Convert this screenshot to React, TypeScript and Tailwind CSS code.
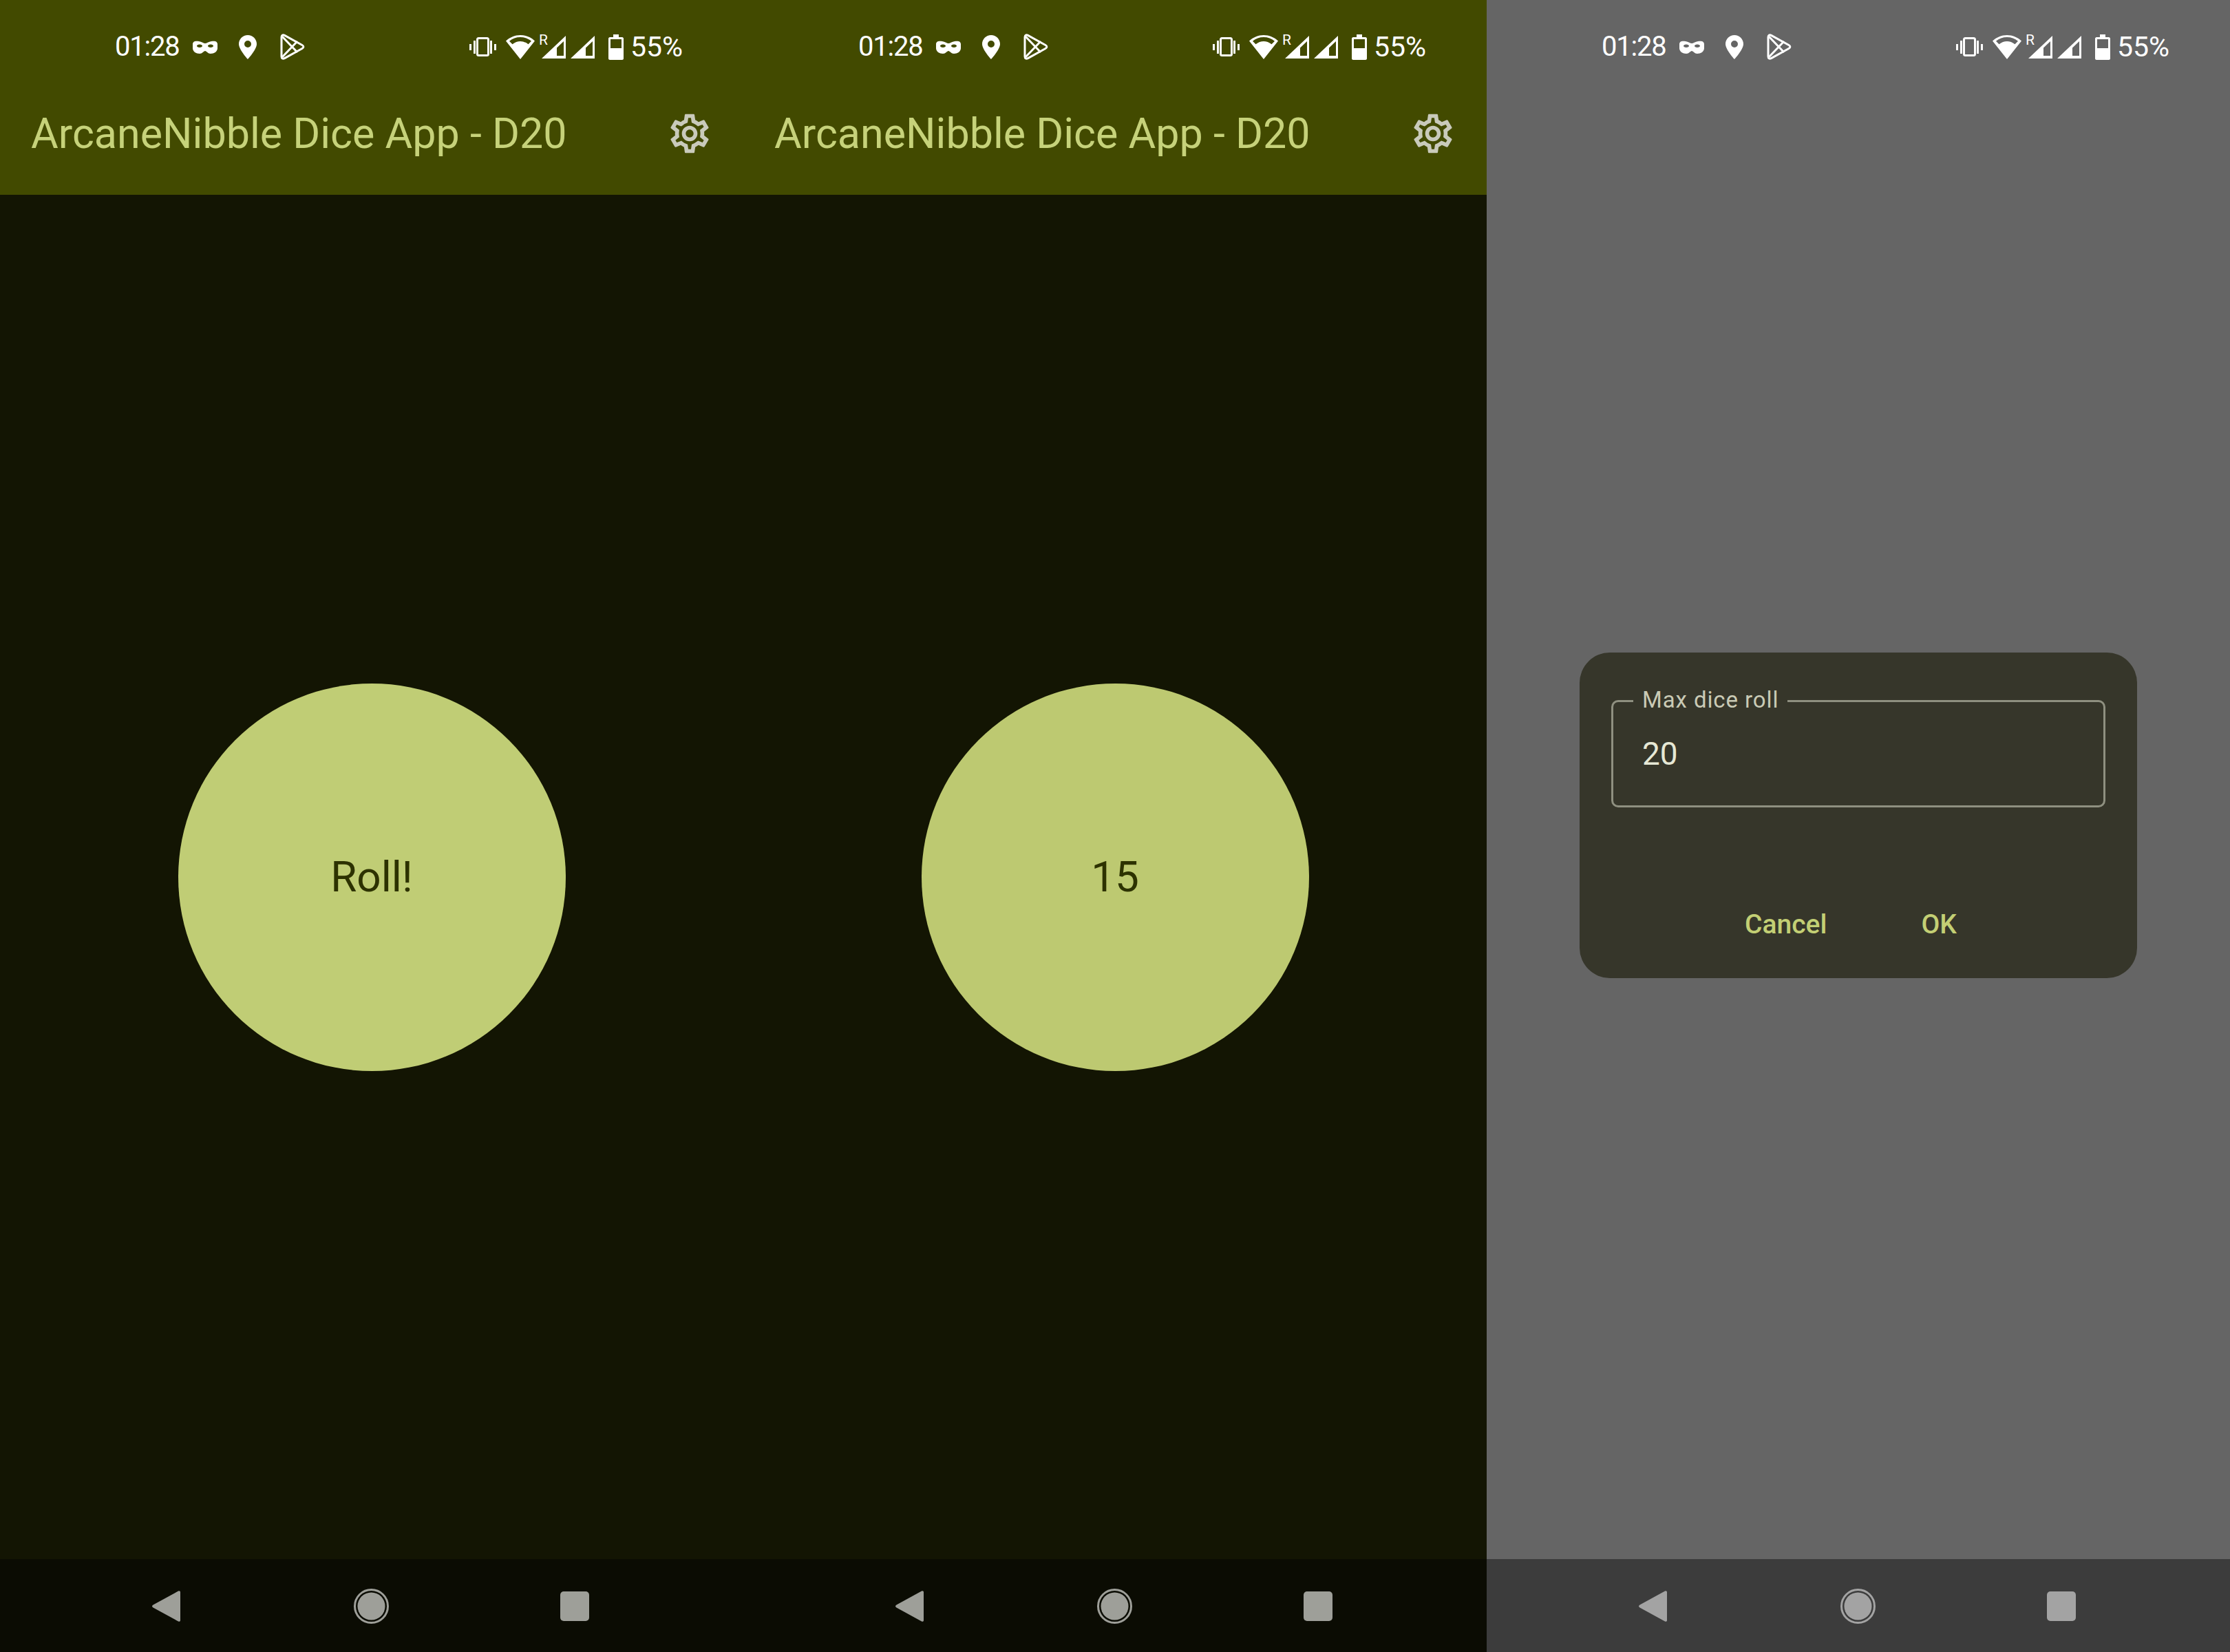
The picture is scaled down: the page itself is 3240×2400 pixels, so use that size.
const ROBOTO = "font-['Roboto','Liberation_Sans',sans-serif]";

function MaskIcon() {
  return (
    <svg width="36" height="19" viewBox="0 0 36 19" fill="#fff" fillRule="evenodd" className="ml-[19px]">
      <path d="M0 5C0 1 4 0 9 1c4 .9 7 3 9 3s5-2.100 9-3c5-1 9 0 9 4v6c0 5-5 8-10 8-4 0-6-4-8-4s-4 4-8 4c-5 0-10-3-10-8zM10 5.500c-2.500 0-4 1.200-4 2.300S7.500 10 10 10s4-1.100 4-2.200S12.500 5.500 10 5.500zm16 0c-2.500 0-4 1.200-4 2.300S23.500 10 26 10s4-1.100 4-2.200-1.500-2.300-4-2.300z" />
    </svg>
  );
}

function PinIcon() {
  return (
    <svg width="26" height="35" viewBox="0 0 26 35" fill="#fff" fillRule="evenodd" className="ml-[31px]">
      <path d="M13 0C5.800 0 0 5.800 0 13c0 8 13 22 13 22s13-14 13-22C26 5.800 20.200 0 13 0zm0 8a5 5 0 1 1 0 10 5 5 0 0 1 0-10z" />
    </svg>
  );
}

function PlayIcon() {
  return (
    <svg width="36" height="38" viewBox="0 0 36 38" fill="none" stroke="#fff" strokeWidth="3" strokeLinejoin="round" className="ml-[34px]">
      <path d="M2 5c0-3 2-4 4.500-2.600L32 16.500c2.500 1.400 2.500 3.600 0 5L6.500 35.600C4 37 2 36 2 33z" />
      <path d="M3 4l22 23M3 34l22-23" />
    </svg>
  );
}

function VibrateIcon() {
  return (
    <svg width="39" height="28" viewBox="0 0 39 28" fill="#fff">
      <rect x="11.500" y="1.500" width="16" height="25" rx="2" fill="none" stroke="#fff" strokeWidth="3" />
      <rect x="0" y="10" width="3" height="9" />
      <rect x="6" y="5" width="3" height="19" />
      <rect x="30" y="5" width="3" height="19" />
      <rect x="36" y="10" width="3" height="9" />
    </svg>
  );
}

function WifiIcon() {
  return (
    <svg width="42" height="35" viewBox="0 0 42 35" fill="#fff" fillRule="evenodd" className="ml-[14px]">
      <path d="M0 8.500C6 3 13 0 21 0s15 3 21 8.500L21 35zM5 8.800l4.500 4.500C13 10.500 17 9 21 9s8 1.500 11.500 4.300L37 8.800C32.500 5 27 3 21 3S9.500 5 5 8.800z" />
    </svg>
  );
}

function SignalIcon({ className }: { className?: string }) {
  return (
    <svg width="35" height="33" viewBox="0 0 35 33" fill="#fff" fillRule="evenodd" className={className}>
      <path d="M0 33L35 0v33zM22 29h10V8l-10 9.500z" />
    </svg>
  );
}

function BatteryIcon() {
  return (
    <svg width="22" height="37" viewBox="0 0 22 37" fill="#fff" fillRule="evenodd" className="ml-[20px]">
      <path d="M7 0h8v4h5c1 0 2 1 2 2v29c0 1-1 2-2 2H2c-1 0-2-1-2-2V6c0-1 1-2 2-2h5zM3 7v13h16V7z" />
    </svg>
  );
}

function GearIcon() {
  return (
    <svg width="68" height="68" viewBox="0 0 24 24" fill="#c9cabb">
      <path d="M19.430 12.980c.04-.32.07-.64.07-.98 0-.34-.03-.66-.07-.98l2.110-1.650c.19-.15.24-.42.12-.64l-2-3.460c-.09-.16-.26-.25-.44-.25-.06 0-.12.01-.17.03l-2.490 1c-.52-.4-1.080-.73-1.690-.98l-.38-2.650C14.460 2.180 14.250 2 14 2h-4c-.25 0-.46.18-.49.42l-.38 2.650c-.61.25-1.170.59-1.690.98l-2.490-1c-.06-.02-.12-.03-.18-.03-.17 0-.34.09-.43.25l-2 3.460c-.13.22-.07.49.12.64l2.110 1.650c-.04.32-.07.65-.07.98 0 .33.03.66.07.98l-2.110 1.650c-.19.15-.24.42-.12.64l2 3.460c.09.16.26.25.44.25.06 0 .12-.01.17-.03l2.490-1c.52.4 1.080.73 1.690.98l.38 2.650c.03.24.24.42.49.42h4c.25 0 .46-.18.49-.42l.38-2.650c.61-.25 1.170-.59 1.690-.98l2.490 1c.06.02.12.03.18.03.17 0 .34-.09.43-.25l2-3.460c.12-.22.07-.49-.12-.64l-2.110-1.650zm-1.980-1.710c.04.31.05.52.05.73 0 .21-.02.43-.05.73l-.14 1.130.89.7 1.080.84-.7 1.210-1.270-.51-1.040-.42-.9.68c-.43.32-.84.56-1.250.73l-1.060.43-.16 1.130-.2 1.350h-1.400l-.19-1.350-.16-1.130-1.060-.43c-.43-.18-.83-.41-1.230-.71l-.91-.7-1.060.43-1.270.51-.7-1.210 1.080-.84.89-.7-.14-1.130c-.03-.31-.05-.54-.05-.74s.02-.43.05-.73l.14-1.130-.89-.7-1.080-.84.7-1.210 1.270.51 1.040.42.9-.68c.43-.32.84-.56 1.250-.73l1.060-.43.16-1.130.2-1.350h1.390l.19 1.350.16 1.130 1.060.43c.43.18.83.41 1.230.71l.91.7 1.060-.43 1.270-.51.7 1.210-1.070.85-.89.7.14 1.130zM12 8c-2.210 0-4 1.790-4 4s1.790 4 4 4 4-1.790 4-4-1.790-4-4-4zm0 6c-1.100 0-2-.9-2-2s.9-2 2-2 2 .9 2 2-.9 2-2 2z" />
    </svg>
  );
}

function StatusBar() {
  return (
    <div className="flex h-[129px] items-start justify-between pl-[167px] pr-[88px] pt-[49px] text-white">
      <div className="flex h-[38px] items-center">
        <span className="text-[40px] leading-none tracking-[-1.2px]">01:28</span>
        <MaskIcon />
        <PinIcon />
        <PlayIcon />
      </div>
      <div className="flex h-[38px] items-center">
        <VibrateIcon />
        <WifiIcon />
        <div className="relative ml-[10px]">
          <SignalIcon />
          <span className="absolute left-[-4px] top-[-4px] text-[21px] leading-none">R</span>
        </div>
        <SignalIcon className="ml-[7px]" />
        <BatteryIcon />
        <span className="ml-[10px] text-[41px] leading-none">55%</span>
      </div>
    </div>
  );
}

function Toolbar() {
  return (
    <div className="flex h-[154px] items-center justify-between pb-[24px] pl-[45px] pr-[44px]">
      <span className="text-[61px] leading-none text-[#c6d27a]">ArcaneNibble Dice App - D20</span>
      <GearIcon />
    </div>
  );
}

function NavBar({ bg, color }: { bg: string; color: string }) {
  return (
    <div className={`flex h-[135px] items-center pl-[221px] pt-[2px] ${bg}`}>
      <svg width="41" height="45" viewBox="0 0 41 45" fill={color}>
        <path d="M38 .600c1.500-1 3-.3 3 1.400v41c0 1.700-1.500 2.400-3 1.400L1.500 24.500c-2-1.200-2-2.800 0-4z" />
      </svg>
      <svg width="51" height="51" viewBox="0 0 51 51" fill={color} className="ml-[252px]">
        <circle cx="25.500" cy="25.500" r="24" fill="none" stroke={color} strokeWidth="3" />
        <circle cx="25.500" cy="25.500" r="20" />
      </svg>
      <div className={`ml-[249px] h-[43px] w-[42px] rounded-[5px] ${color === "#9e9f99" ? "bg-[#9e9f99]" : "bg-[#a3a3a3]"}`} />
    </div>
  );
}

function RollPanel({ label, fill }: { label: string; fill: string }) {
  return (
    <div className="flex h-[2400px] w-[1080px] flex-col bg-[#131503]">
      <div className="bg-[#424a00]">
        <StatusBar />
        <Toolbar />
      </div>
      <div className="flex flex-1 items-center justify-center">
        <div className={`flex h-[563px] w-[563px] items-center justify-center rounded-full text-[#2d3200] ${fill}`}>
          <span className="text-[62px] leading-none">{label}</span>
        </div>
      </div>
      <NavBar bg="bg-[#0b0c03]" color="#9e9f99" />
    </div>
  );
}

function DialogPanel() {
  return (
    <div className="flex h-[2400px] w-[1080px] flex-col bg-[#656565]">
      <StatusBar />
      <div className="flex flex-1 justify-center pt-[819px]">
        <div className="h-[473px] w-[810px] rounded-[44px] bg-[#36362a] px-[46px] pt-[69px]">
          <div className="relative flex h-[156px] items-center rounded-[10px] border-[3px] border-[#8f9080] pl-[42px]">
            <span className="absolute left-[29px] top-[-23px] bg-[#36362a] px-[13px] text-[33px] leading-[40px] tracking-[0.9px] text-[#c9cab5]">
              Max dice roll
            </span>
            <span className="text-[46px] leading-none text-[#e6e8d5]">20</span>
          </div>
          <div className="mt-[151px] flex items-center text-[39px] font-medium leading-none text-[#c3cf74]">
            <span className="ml-[194px]">Cancel</span>
            <span className="ml-[137px]">OK</span>
          </div>
        </div>
      </div>
      <NavBar bg="bg-[#3c3c3c]" color="#a3a3a3" />
    </div>
  );
}

export default function App() {
  return (
    <div className={`flex h-[2400px] w-[3240px] ${ROBOTO}`}>
      <RollPanel label="Roll!" fill="bg-[#c0cd75]" />
      <RollPanel label="15" fill="bg-[#bdc971]" />
      <DialogPanel />
    </div>
  );
}
